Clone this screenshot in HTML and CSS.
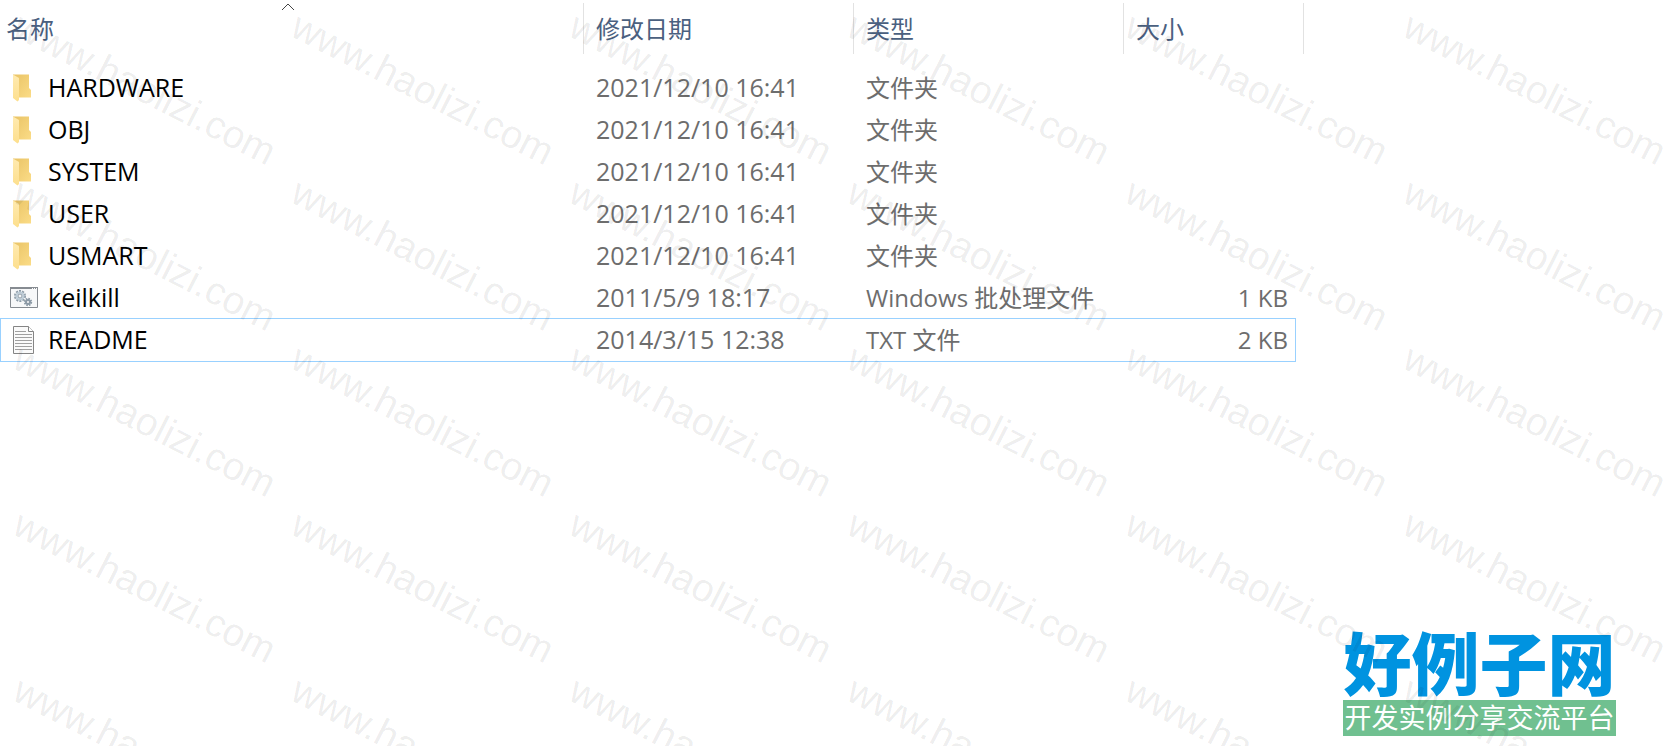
FILE: index.html
```html
<!DOCTYPE html>
<html lang="zh-CN">
<head>
<meta charset="utf-8">
<title>文件列表</title>
<link rel="stylesheet" href="styles.css">
</head>
<body>
<svg class="defs" aria-hidden="true">
  <defs>
    <linearGradient id="back" x1="0" y1="0" x2="1" y2="1">
      <stop offset="0" stop-color="#e9c365"/>
      <stop offset="1" stop-color="#fbdc87"/>
    </linearGradient>
    <linearGradient id="flap" x1="0" y1="0" x2="0" y2="1">
      <stop offset="0" stop-color="#ffeab0"/>
      <stop offset="1" stop-color="#fddf8d"/>
    </linearGradient>
    <symbol id="folder" viewBox="0 0 28 28">
      <path fill="url(#back)" d="M3 0.500H19V14L21 16V23.500H8L3 24Z"/>
      <path fill="url(#flap)" d="M3 0.500L9 4V26L7.500 27.500L3 24Z"/>
    </symbol>
    <symbol id="batch" viewBox="0 0 28 28">
      <path fill="#f7f8f9" stroke="#868b91" d="M.5 3.500H27.500V23.500H.5Z"/>
      <path stroke="#868b91" stroke-width="2" d="M0 4H28"/>
      <path stroke="#fff" stroke-dasharray="1 1" d="M22 4.500H27"/>
      <g fill="none" stroke="#8c9aa6">
        <circle cx="10" cy="12" r="5" stroke-width="2" stroke-dasharray="2 1.140"/>
        <circle cx="10" cy="12" r="3.500" stroke="#bccbd6" stroke-width="2"/>
        <circle cx="10" cy="12" r="2"/>
        <circle cx="18" cy="18" r="3.200" stroke-width="2" stroke-dasharray="1.500 1"/>
        <circle cx="18" cy="18" r="2" stroke-width="2"/>
      </g>
    </symbol>
    <symbol id="text" viewBox="0 0 28 28">
      <path fill="#fafafa" stroke="#858585" d="M3.500 .5H18.500L23.500 5.500V27.500H3.500Z"/>
      <path fill="#fff" stroke="#858585" d="M18.500 .5V5.500H23.500"/>
      <path stroke="#a0a0a0" d="M5 5.500H16M5 8.500H22M5 11.500H22M5 14.500H22M5 17.500H22M5 20.500H22M5 23.500H22"/>
    </symbol>
  </defs>
</svg>

<main class="explorer">
  <table class="files">
    <colgroup><col class="col-name"><col class="col-date"><col class="col-type"><col class="col-size"></colgroup>
    <thead>
      <tr>
        <th scope="col" aria-sort="ascending"><button type="button">名称</button><svg class="sort" viewBox="0 0 14 8" aria-hidden="true"><path d="M1 7L7 1L13 7"/></svg></th>
        <th scope="col"><button type="button">修改日期</button></th>
        <th scope="col"><button type="button">类型</button></th>
        <th scope="col"><button type="button">大小</button></th>
      </tr>
    </thead>
    <tbody>
      <tr><td><div class="name"><svg><use href="#folder"/></svg><span>HARDWARE</span></div></td><td class="date">2021/12/10 16:41</td><td>文件夹</td><td></td></tr>
      <tr><td><div class="name"><svg><use href="#folder"/></svg><span>OBJ</span></div></td><td class="date">2021/12/10 16:41</td><td>文件夹</td><td></td></tr>
      <tr><td><div class="name"><svg><use href="#folder"/></svg><span>SYSTEM</span></div></td><td class="date">2021/12/10 16:41</td><td>文件夹</td><td></td></tr>
      <tr><td><div class="name"><svg><use href="#folder"/></svg><span>USER</span></div></td><td class="date">2021/12/10 16:41</td><td>文件夹</td><td></td></tr>
      <tr><td><div class="name"><svg><use href="#folder"/></svg><span>USMART</span></div></td><td class="date">2021/12/10 16:41</td><td>文件夹</td><td></td></tr>
      <tr><td><div class="name"><svg><use href="#batch"/></svg><span>keilkill</span></div></td><td class="date">2011/5/9 18:17</td><td>Windows 批处理文件</td><td>1 KB</td></tr>
      <tr class="focused"><td><div class="name"><svg><use href="#text"/></svg><span>README</span></div></td><td class="date">2014/3/15 12:38</td><td>TXT 文件</td><td>2 KB</td></tr>
    </tbody>
  </table>
  <div class="brand">
    <div class="brand-name">好例子网</div>
    <div class="brand-tag">开发实例分享交流平台</div>
  </div>
</main>

<div class="watermark" aria-hidden="true">
  <span>www.haolizi.com</span><span>www.haolizi.com</span><span>www.haolizi.com</span><span>www.haolizi.com</span><span>www.haolizi.com</span><span>www.haolizi.com</span>
  <span>www.haolizi.com</span><span>www.haolizi.com</span><span>www.haolizi.com</span><span>www.haolizi.com</span><span>www.haolizi.com</span><span>www.haolizi.com</span>
  <span>www.haolizi.com</span><span>www.haolizi.com</span><span>www.haolizi.com</span><span>www.haolizi.com</span><span>www.haolizi.com</span><span>www.haolizi.com</span>
  <span>www.haolizi.com</span><span>www.haolizi.com</span><span>www.haolizi.com</span><span>www.haolizi.com</span><span>www.haolizi.com</span><span>www.haolizi.com</span>
  <span>www.haolizi.com</span><span>www.haolizi.com</span><span>www.haolizi.com</span><span>www.haolizi.com</span><span>www.haolizi.com</span><span>www.haolizi.com</span>
</div>
</body>
</html>
```
FILE: styles.css
```css
* {
  box-sizing: border-box;
}

body {
  margin: 0;
  background: #fff;
  color: #6d6d6d;
  font: 24px/32px "Open Sans", "Noto Sans CJK SC", sans-serif;
}

.defs {
  position: absolute;
  width: 0;
  height: 0;
}

.explorer {
  display: flex;
  flex-direction: column;
  justify-content: space-between;
  min-height: 100vh;
}

/* File list */
.files {
  width: 1294px;
  margin-left: 1px;
  table-layout: fixed;
  border-collapse: collapse;
}

.col-name {
  width: 582px;
}

.col-date,
.col-type {
  width: 270px;
}

th {
  position: relative;
  height: 67px;
  padding: 0;
  font-weight: 400;
  text-align: left;
  vertical-align: top;
}

th::after {
  content: "";
  position: absolute;
  top: 3px;
  right: -1px;
  width: 1px;
  height: 51px;
  background: #e2e2e2;
}

th:last-child::after {
  right: -9px;
}

th button {
  width: 100%;
  padding: 2px 13px 0;
  border: 0;
  background: none;
  color: #4a6080;
  font: inherit;
  line-height: 54px;
  text-align: left;
}

th:first-child button {
  padding-left: 5px;
}

.sort {
  position: absolute;
  top: 3px;
  left: 280px;
  width: 14px;
  height: 8px;
  fill: none;
  stroke: #444;
}

td {
  height: 42px;
  padding: 0 7px 0 13px;
  white-space: nowrap;
}

td:first-child {
  padding-left: 9px;
  color: #000;
}

td:last-child {
  text-align: right;
}

.date {
  padding-bottom: 2px;
  font-size: 25px;
}

.focused {
  outline: 1px solid #99d1ff;
}

.name {
  display: flex;
  align-items: center;
  gap: 10px;
  font-size: 25px;
}

.name span {
  padding-bottom: 2px;
}

.name svg {
  width: 28px;
  height: 28px;
}

/* Site brand */
.brand {
  align-self: flex-end;
  width: 273px;
  margin: 0 56px 10px 0;
  text-align: center;
  white-space: nowrap;
}

.brand-name {
  color: #0093e0;
  font-size: 68px;
  font-weight: 900;
  line-height: 72px;
}

.brand-tag {
  background: #70c090;
  color: #fff;
  font-size: 27px;
  line-height: 36px;
}

/* Repeated diagonal site address */
.watermark {
  position: absolute;
  inset: 0;
  display: grid;
  grid-template-columns: repeat(6, 278px);
  grid-auto-rows: 166px;
  padding: 2px 0 0 10px;
  overflow: hidden;
  color: rgba(0, 0, 0, 0.08);
  font: 39px/40px "Liberation Sans", sans-serif;
  pointer-events: none;
}

.watermark span {
  transform: rotate(27deg);
  transform-origin: 0 34px;
}
```
